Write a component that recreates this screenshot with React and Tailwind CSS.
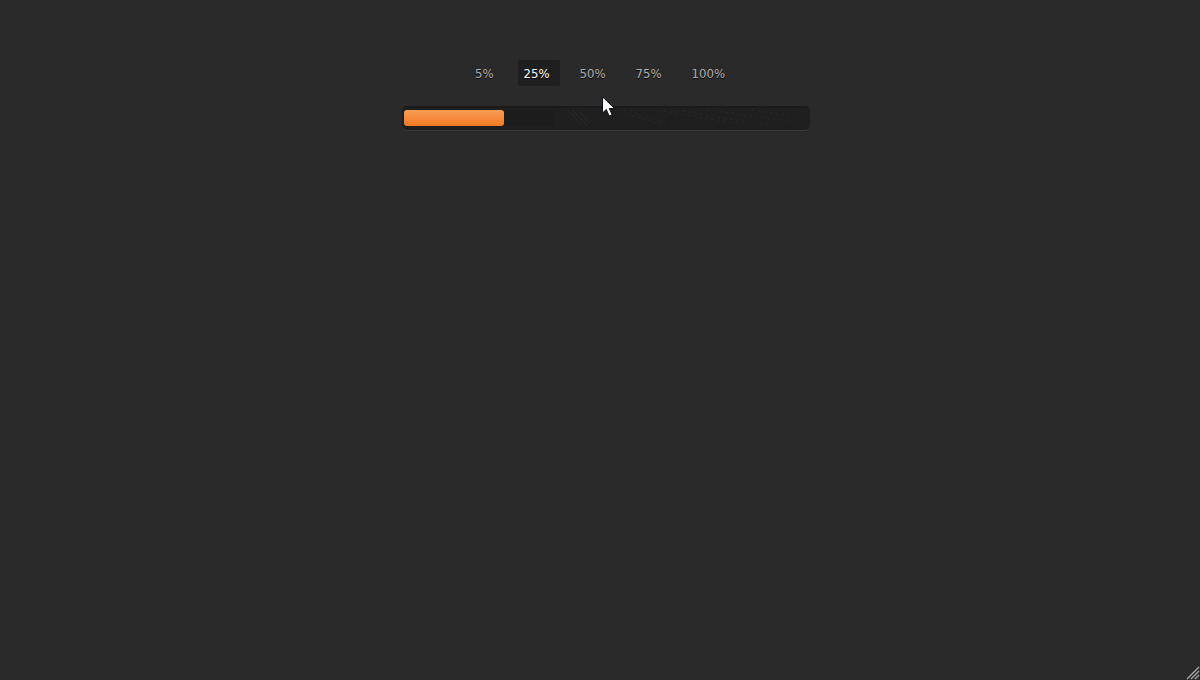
import { useState } from "react";

const steps = [5, 25, 50, 75, 100];

function Cursor() {
  return (
    <svg className="pointer-events-none absolute top-[96px] left-1/2 ml-0.5 h-[21px] w-[13px]" viewBox="0 0 13 21" aria-hidden="true">
      <path d="M.5 .8V17l3.8-3.6 2.8 6.6 3-1.3-2.8-6.2h5.2Z" fill="#fff" stroke="#101018" strokeWidth="1" />
    </svg>
  );
}

function ResizeGrip() {
  return (
    <svg className="absolute right-0 bottom-0 h-[14px] w-[14px]" viewBox="0 0 14 14" aria-hidden="true">
      <path d="M1 13 13 1M5 13l8-8M9 13l4-4" stroke="#a5a5a5" strokeWidth="1.4" />
    </svg>
  );
}

function TrackTexture() {
  return (
    <svg className="absolute inset-0 h-full w-full" viewBox="0 0 408 24" preserveAspectRatio="none" aria-hidden="true">
      <rect x="100" y="4" width="52" height="16" fill="#1c1c1c" />
      <g fill="none" stroke="#2b2b2b" strokeWidth="1">
        <path d="M166 4l13 14M170 4l15 15M176 4l12 13" />
        <path d="M222 4l47 14M224 8l36 10M256 4l80 14M275 4l90 15M306 4l86 12M350 4l50 8" strokeDasharray="2 4" />
      </g>
    </svg>
  );
}

export default function App() {
  const [value, setValue] = useState(25);
  return (
    <main className="relative flex min-h-screen flex-col items-center bg-[#2a2a2a] pt-[60px] font-['DejaVu_Sans_Condensed','DejaVu_Sans',sans-serif] text-[13px]">
      <div role="radiogroup" aria-label="Progress" className="flex gap-[18px]">
        {steps.map((step) => (
          <label
            key={step}
            className="relative cursor-pointer rounded-[3px] px-1.5 pt-1 pb-0.5 leading-5 text-[#b0b0b0] [text-shadow:0_1px_0_#000] has-checked:-mr-1 has-checked:bg-[#1f1f1f] has-checked:pr-2.5 has-checked:text-white"
          >
            <input
              type="radio"
              name="progress"
              className="absolute inset-0 cursor-pointer appearance-none opacity-0"
              checked={value === step}
              onChange={() => setValue(step)}
            />
            {`${step}%`}
          </label>
        ))}
      </div>
      <div className="mt-5 w-full max-w-[396px]">
        <div
          role="progressbar"
          aria-label="Progress"
          aria-valuenow={value}
          aria-valuemin={0}
          aria-valuemax={100}
          className="relative -mr-3 rounded-[5px] bg-[#1f1f1f] py-1 pr-1.5 pl-0.5 shadow-[0_1px_0_#3c3c3c,inset_0_1px_2px_#191919]"
        >
          <TrackTexture />
          <div
            className="relative h-4 rounded-[3px] bg-linear-to-b from-[#f89c55] to-[#f27a1f]"
            style={{ width: `${value}%` }}
          />
        </div>
      </div>
      <Cursor />
      <ResizeGrip />
    </main>
  );
}
